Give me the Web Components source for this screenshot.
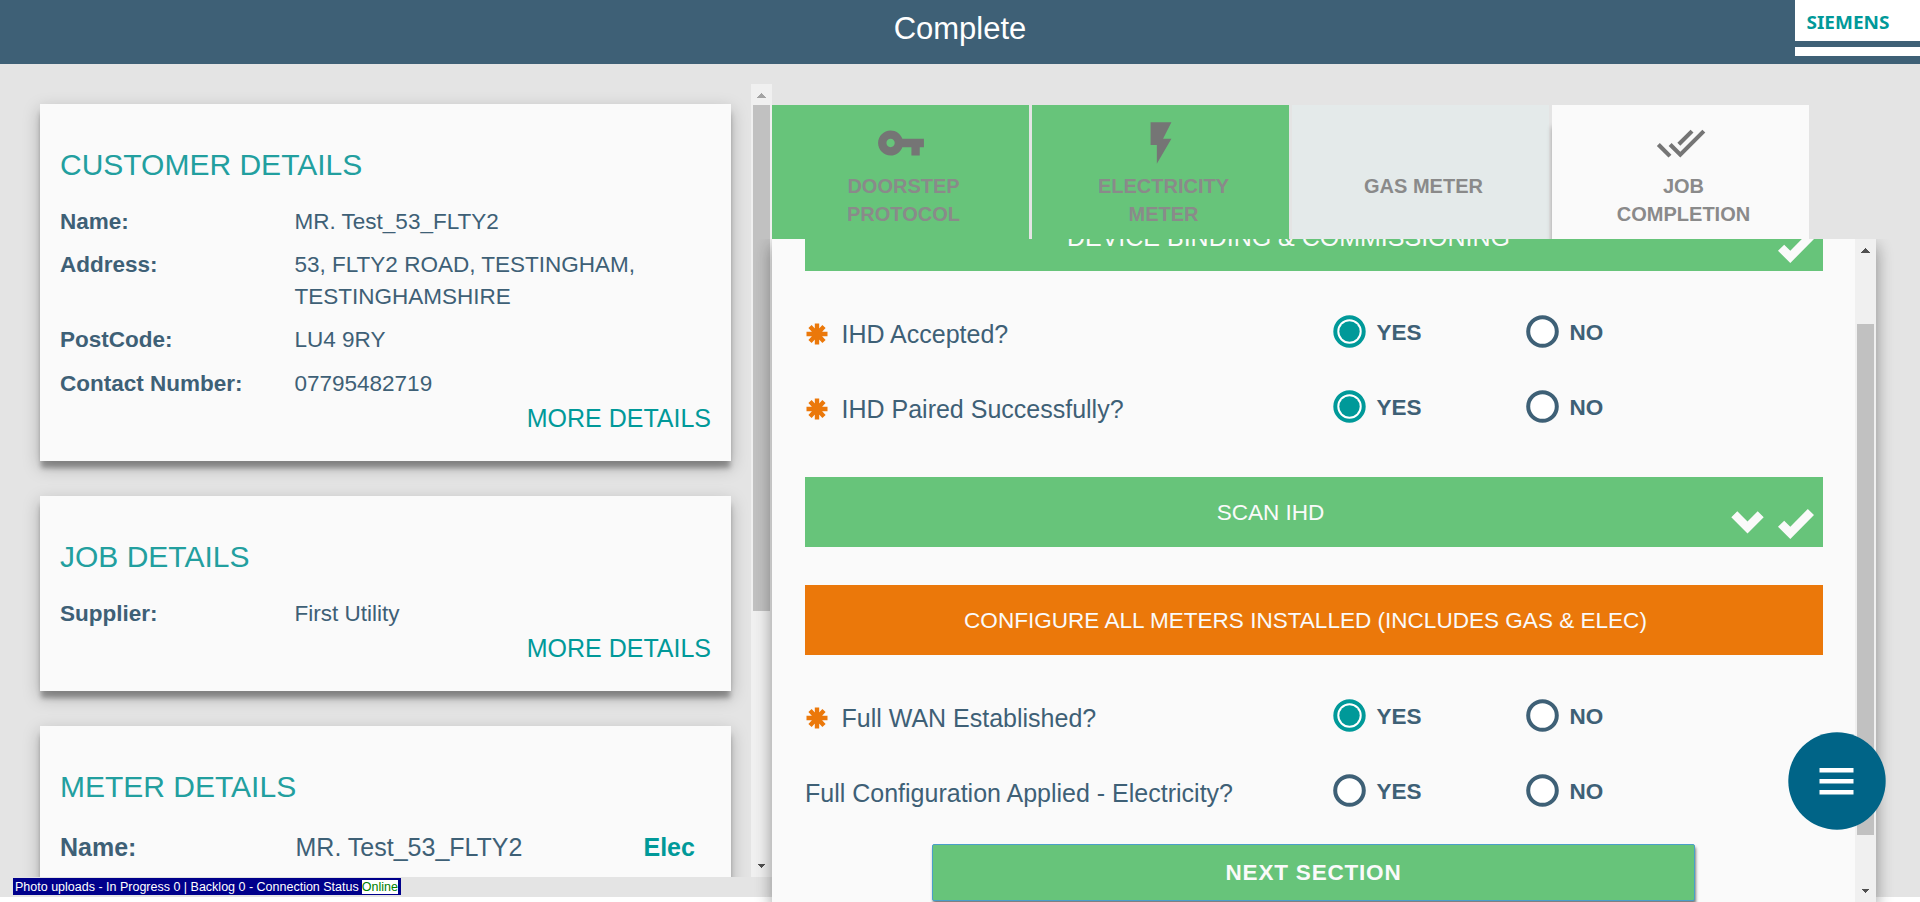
<!DOCTYPE html>
<html lang="en">
<head>
<meta charset="utf-8">
<title>Complete</title>
<style>
  html, body { margin: 0; height: 100%; overflow: hidden; background: #fff; }
  body { font-family: "Liberation Sans", Arial, sans-serif; color: #3e6076; }
</style>
</head>
<body>
<job-app></job-app>

<template id="t-job-app">
  <style>
    :host { display: block; width: 1920px; height: 902px; position: relative; }
    main { display: flex; height: 833px; background: #e4e4e4; }
    .left { display: flex; width: 772px; height: 793px; margin-top: 20px; overflow: hidden; }
    .cards { flex: 1; display: flex; flex-direction: column; gap: 35px; padding: 20px 20px 0 40px; }
    .right { width: 1104px; padding-top: 41px; position: relative; }
    .tabs { display: flex; gap: 3px; height: 134px; }
    .panel { display: flex; height: 663px; background: #fafafa; position: relative;
      box-shadow: 0 8px 14px rgba(0,0,0,.26), 0 6px 18px rgba(0,0,0,.16); clip-path: inset(0 -30px 0 -30px); }
    .form { flex: 1; overflow: hidden; padding: 0 32px 0 33px; }
    .sheet { margin-top: -38px; }
    .qs { padding: 25.5px 0 30.5px; }
    .qs.last { padding: 25.5px 0 13.5px; }
    .gap { height: 38px; }
  </style>
  <app-header>Complete</app-header>
  <main>
    <section class="left">
      <div class="cards">
        <info-card heading="CUSTOMER DETAILS" more style="height:357px">
          <info-row label="Name:">MR. Test_53_FLTY2</info-row>
          <info-row label="Address:">53, FLTY2 ROAD, TESTINGHAM, TESTINGHAMSHIRE</info-row>
          <info-row label="PostCode:">LU4 9RY</info-row>
          <info-row label="Contact Number:">07795482719</info-row>
        </info-card>
        <info-card heading="JOB DETAILS" more style="height:195px">
          <info-row label="Supplier:">First Utility</info-row>
        </info-card>
        <info-card heading="METER DETAILS" style="height:195px">
          <info-row large label="Name:" tag="Elec">MR. Test_53_FLTY2</info-row>
        </info-card>
      </div>
      <scroll-rail style="--start:21px;--size:506px;--up:#a3a3a3"></scroll-rail>
    </section>
    <section class="right">
      <div class="tabs">
        <step-tab state="done" icon="key">DOORSTEP<br>PROTOCOL</step-tab>
        <step-tab state="done" icon="bolt">ELECTRICITY<br>METER</step-tab>
        <step-tab state="idle" icon="none">GAS METER</step-tab>
        <step-tab state="current" icon="doneall">JOB<br>COMPLETION</step-tab>
      </div>
      <div class="panel">
        <div class="form"><div class="sheet">
          <section-bar check style="--shift:51px;--size:25px">DEVICE BINDING &amp; COMMISSIONING</section-bar>
          <div class="qs">
            <question-row required answer="YES">IHD Accepted?</question-row>
            <question-row required answer="YES">IHD Paired Successfully?</question-row>
          </div>
          <section-bar check chevron style="--shift:87px">SCAN IHD</section-bar>
          <div class="gap"></div>
          <section-bar style="--shift:17px;--bg:#eb780a">CONFIGURE ALL METERS INSTALLED (INCLUDES GAS &amp; ELEC)</section-bar>
          <div class="qs last">
            <question-row required answer="YES">Full WAN Established?</question-row>
            <question-row>Full Configuration Applied - Electricity?</question-row>
          </div>
          <next-button>NEXT SECTION</next-button>
        </div></div>
        <scroll-rail style="--start:85px;--size:511px;--up:#505050"></scroll-rail>
      </div>
    </section>
  </main>
  <menu-fab></menu-fab>
  <upload-status state="Online">Photo uploads - In Progress 0 | Backlog 0 - Connection Status</upload-status>
</template>

<template id="t-app-header">
  <style>
    :host { display: grid; grid-template-columns: 125px 1fr 125px; height: 64px; background: #3e6076; color: #fff; }
    .title { grid-column: 2; text-align: center; font-size: 31px; line-height: 58px; }
  </style>
  <div class="title"><slot></slot></div>
  <brand-logo></brand-logo>
</template>

<template id="t-brand-logo">
  <style>
    :host { display: flex; flex-direction: column; height: 56px; background: #fff; }
    svg { display: block; height: 41px; }
    i { height: 6px; background: #3e6076; }
  </style>
  <svg width="125" height="41"><text x="11.5" y="28.6" textLength="83" lengthAdjust="spacingAndGlyphs" font-family="Noto Sans, sans-serif" font-weight="700" font-size="18.2" fill="#009999">SIEMENS</text></svg>
  <i></i>
</template>

<template id="t-info-card">
  <style>
    :host { display: block; flex: none; box-sizing: border-box; background: #fafafa; padding: 41px 20px 0;
      box-shadow: 0 8px 5px -1px rgba(0,0,0,.3), 0 6px 16px rgba(0,0,0,.25); }
    h2 { margin: 0 0 21px; font-size: 30px; line-height: 40px; font-weight: 400; color: #229f9f; }
    .rows { display: flex; flex-direction: column; gap: 11.2px; }
    .more { margin-top: 2px; text-align: right; font-size: 25px; line-height: 32px; color: #009999; }
  </style>
  <h2></h2>
  <div class="rows"><slot></slot></div>
  <div class="more">MORE DETAILS</div>
</template>

<template id="t-info-row">
  <style>
    :host { display: grid; grid-template-columns: 234.5px 360px 1fr; font-size: 22.5px; line-height: 32px; }
    :host([large]) { grid-template-columns: 235.5px 348px 1fr; font-size: 25px; padding-top: 2.5px; }
    b { font-weight: 700; }
    .tag { color: #009999; }
  </style>
  <b class="label"></b><span><slot></slot></span><b class="tag"></b>
</template>

<template id="t-scroll-rail">
  <style>
    :host { display: flex; flex-direction: column; width: 21px; background: #f0f0f0; justify-content: space-between; }
    svg { display: block; height: 21px; width: 21px; flex: none; }
    .track { flex: 1; padding: calc(var(--start) - 21px) 2px 0; }
    .thumb { height: var(--size); background: #c1c1c1; }
  </style>
  <svg shape-rendering="crispEdges"><path d="M6 14l4.5-5 4.5 5z" style="fill:var(--up)"/></svg>
  <div class="track"><div class="thumb"></div></div>
  <svg shape-rendering="crispEdges"><path d="M6 7.5h9l-4.5 5z" fill="#505050"/></svg>
</template>

<template id="t-step-tab">
  <style>
    :host { display: flex; flex-direction: column; align-items: center; box-sizing: border-box; width: 257px; padding-top: 13px;
      background: #67c47a; color: #8a8a8a; }
    :host([state=idle]) { background: #e4eaea; }
    :host([state=current]) { background: #fafafa; box-shadow: -2px 20px 5px -2px rgba(0,0,0,.3); clip-path: inset(0 0 0 -8px); }
    svg { display: block; width: 50px; height: 50px; fill: #757575; }
    .text { padding: 4.4px 0 0 6px; text-align: center; font-weight: 700; font-size: 20px; line-height: 28px; }
  </style>
  <svg viewBox="0 0 24 24"><path/></svg>
  <div class="text"><slot></slot></div>
</template>

<template id="t-section-bar">
  <style>
    :host { display: grid; align-items: center; height: 70px; background: var(--bg, #67c47a); color: #fafafa; }
    .text { grid-area: 1/1; text-align: center; font-size: var(--size, 22.55px); line-height: 30px; padding: 2px var(--shift) 0 0; }
    .icons { grid-area: 1/1; justify-self: end; display: flex; gap: 14.5px; padding: 24px 9px 0 0; }
    svg { display: block; fill: #fafafa; }
    :host(:not([check])) .check, :host(:not([chevron])) .chev { display: none; }
  </style>
  <div class="text"><slot></slot></div>
  <div class="icons">
    <svg class="chev" width="33" height="30"><path d="M.3 8.3L6.3 2.3 16.5 12.5 26.7 2.3 32.7 8.3 16.5 24.5z"/></svg>
    <svg class="check" width="36" height="30"><path d="M0 17.8L6.2 11.8 12.3 17.7 29.8 0 36 6 12.3 30z"/></svg>
  </div>
</template>

<template id="t-question-row">
  <style>
    :host { display: grid; grid-template-columns: 528px 193px 1fr; align-items: center; height: 75px; font-size: 25px; }
    .label { display: flex; align-items: center; line-height: 30px; margin-top: -1px; }
    svg { flex: none; width: 22px; height: 22px; margin: 0 13.5px 0 1px; }
    :host(:not([required])) svg { display: none; }
  </style>
  <div class="label"><svg viewBox="-11 -11 22 22" stroke="#eb780a" stroke-width="4.4"><path d="M0-10.5V10.5M-10.5 0H10.5M-7-7.5L7 7.5M7-7.5L-7 7.5"/></svg><slot></slot></div>
  <radio-option id="yes">YES</radio-option>
  <radio-option id="no">NO</radio-option>
</template>

<template id="t-radio-option">
  <style>
    :host { display: flex; align-items: center; gap: 11px; font-size: 22.5px; line-height: 30px; font-weight: 700; }
    svg { width: 33px; height: 33px; margin: -5px 0 0 -.5px; }
    span { margin-top: -3px; }
    .on { display: none; }
    :host([checked]) .on { display: block; }
    :host([checked]) .off { display: none; }
  </style>
  <svg viewBox="0 0 33 33">
    <circle class="off" cx="16.5" cy="16.5" r="14.3" fill="#fff" stroke="#3e6076" stroke-width="4"/>
    <g class="on"><circle cx="16.5" cy="16.5" r="14.2" fill="#fff" stroke="#009999" stroke-width="4"/><circle cx="16.5" cy="16.5" r="10.2" fill="#009999"/></g>
  </svg>
  <span><slot></slot></span>
</template>

<template id="t-next-button">
  <style>
    :host { display: block; box-sizing: border-box; width: 763px; height: 57px; margin-left: 127px; text-align: center;
      background: #67c47a; border: 1px solid #4a9fc9; border-radius: 2px; color: #fafafa;
      font-size: 22.5px; font-weight: 700; line-height: 56px; letter-spacing: .8px; box-shadow: 1px 3px 3px rgba(0,0,0,.5); }
  </style>
  <slot></slot>
</template>

<template id="t-menu-fab">
  <style>
    :host { position: absolute; left: 1788px; top: 732px; display: block; width: 98px; height: 98px; }
    svg { display: block; }
  </style>
  <svg width="98" height="98"><circle cx="49" cy="49" r="48.7" fill="#006487"/><path d="M31.5 36h34v4.5h-34zM31.5 47h34v4.5h-34zM31.5 58h34v4.5h-34z" fill="#fff"/></svg>
</template>

<template id="t-upload-status">
  <style>
    :host { position: absolute; left: 13px; top: 878px; display: flex; align-items: center; box-sizing: border-box; width: 388px; height: 17px;
      padding-left: 2px; background: #00008b; color: #fff; font-size: 12.5px; line-height: 14px; white-space: pre; }
    .state { margin-left: 3px; background: #fff; color: #008000; }
  </style>
  <slot></slot><span class="state"></span>
</template>

<script>
  const ICONS = {
    key: "M12.65 10C11.83 7.67 9.61 6 7 6c-3.31 0-6 2.69-6 6s2.69 6 6 6c2.61 0 4.83-1.67 5.65-4H17v4h4v-4h2v-4H12.65zM7 14c-1.1 0-2-.9-2-2s.9-2 2-2 2 .9 2 2-.9 2-2 2z",
    bolt: "M7 2v11h3v9l7-12h-4l4-8z",
    doneall: "M18 7l-1.41-1.41-6.34 6.34 1.41 1.41L18 7zm4.24-1.41L11.66 16.17 7.48 12l-1.41 1.41L11.66 19l12-12-1.42-1.41zM.41 13.41L6 19l1.41-1.41L1.83 12 .41 13.41z",
    none: ""
  };
  function define(name, setup) {
    customElements.define(name, class extends HTMLElement {
      constructor() {
        super();
        this.attachShadow({ mode: "open" }).append(
          document.getElementById("t-" + name).content.cloneNode(true));
      }
      connectedCallback() { if (setup) setup(this, s => this.shadowRoot.querySelector(s)); }
    });
  }
  define("brand-logo");
  define("app-header");
  define("info-row", (el, $) => {
    $(".label").textContent = el.getAttribute("label");
    $(".tag").textContent = el.getAttribute("tag") || "";
  });
  define("info-card", (el, $) => {
    $("h2").textContent = el.getAttribute("heading");
    if (!el.hasAttribute("more")) $(".more")?.remove();
  });
  define("scroll-rail");
  define("step-tab", (el, $) => $("path").setAttribute("d", ICONS[el.getAttribute("icon")]));
  define("section-bar");
  define("radio-option");
  define("question-row", (el, $) => {
    $("#yes").toggleAttribute("checked", el.getAttribute("answer") === "YES");
    $("#no").toggleAttribute("checked", el.getAttribute("answer") === "NO");
  });
  define("next-button");
  define("menu-fab");
  define("upload-status", (el, $) => $(".state").textContent = el.getAttribute("state"));
  define("job-app");
</script>
</body>
</html>
